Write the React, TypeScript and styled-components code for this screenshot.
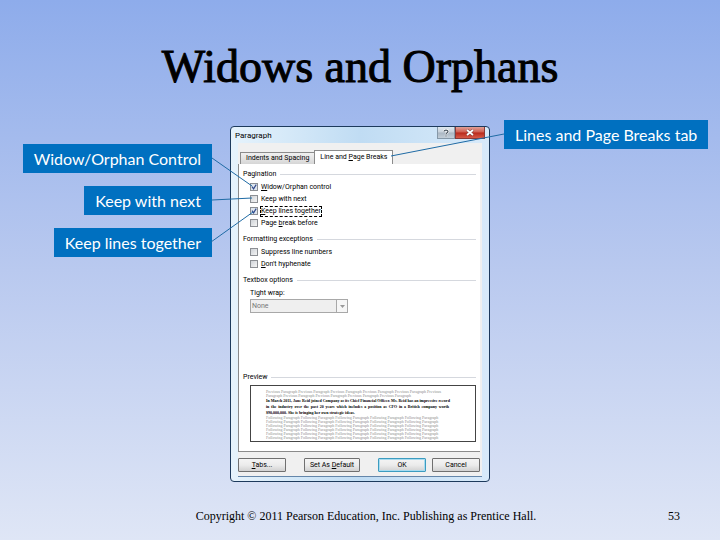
import React from "react";
import styled, { createGlobalStyle, css } from "styled-components";

const GlobalStyle = createGlobalStyle`
  *, *::before, *::after { box-sizing: border-box; }
  body { margin: 0; }
`;

const Slide = styled.main`
  display: flex;
  flex-direction: column;
  min-height: 100vh;
  background: linear-gradient(180deg, #8eaceb 0%, #b9c9ef 50%, #dfe6f6 100%);
  color: #000;
`;

const Title = styled.h1`
  margin: 0;
  padding-top: 39px;
  font: 400 46px/56px "Liberation Serif", serif;
  text-align: center;
  -webkit-text-stroke: 1px #000;
`;

const Stage = styled.section`
  display: grid;
  grid-template-columns: 1fr 260px 1fr;
  align-items: start;
  margin-top: 25px;
`;

const LeftNotes = styled.div`
  display: flex;
  flex-direction: column;
  align-items: flex-end;
  gap: 13px;
  padding: 24px 18px 0 0;
`;

const RightNotes = styled.div`
  display: flex;
  padding-left: 14px;
`;

const Callout = styled.div`
  padding: 0 11px;
  background: #0070c0;
  color: #fff;
  font: 400 16px/29px Lato, sans-serif;
  white-space: nowrap;
`;

const Dialog = styled.section`
  position: relative;
  margin-top: 6px;
  padding: 0 7px 4px;
  border: 1px solid #1d3a5c;
  border-radius: 4px;
  background: linear-gradient(90deg, #e6f3fc 0%, #c0dcf3 50%, #d8eafa 100%);
  font: 400 7px/12px Roboto, sans-serif;
`;

const Connectors = styled.svg`
  position: absolute;
  top: -7px;
  left: -19px;
  overflow: visible;
  pointer-events: none;
`;

const TitleBar = styled.header`
  display: flex;
  justify-content: space-between;
  height: 16px;
  margin: 0 -3px;
`;

const DialogTitle = styled.h2`
  margin: 0;
  padding-top: 2px;
  font: 400 8px/14px Roboto, sans-serif;
`;

const WindowButtons = styled.div`
  display: flex;
`;

const WindowButton = styled.button<{ $close?: boolean }>`
  display: grid;
  place-items: center;
  width: ${(p) => (p.$close ? 30 : 18)}px;
  height: 12px;
  padding: 0;
  border: 1px solid ${(p) => (p.$close ? "#8a3a38" : "#8698a8")};
  border-top: 0;
  background: ${(p) =>
    p.$close
      ? "linear-gradient(#e0a097 0%, #cf5a4c 48%, #b8281a 52%, #d65a48 100%)"
      : "linear-gradient(#dfe8ef 0%, #c6d0da 48%, #aab6c2 52%, #c3ced8 100%)"};
  color: #fff;
`;

const Body = styled.div`
  padding: 7px 2px 4px 0;
  border-bottom: 1px solid #6486aa;
  background: #f0f0f0;
`;

const TabList = styled.div`
  display: flex;
  align-items: flex-end;
  padding-left: 2px;
`;

const Tab = styled.button<{ $active?: boolean }>`
  height: ${(p) => (p.$active ? 14 : 12)}px;
  padding: 0 5px;
  border: 1px solid #8b8b8b;
  border-bottom: 0;
  ${(p) => !p.$active && css`border-right: 0;`}
  background: ${(p) => (p.$active ? "#fff" : "linear-gradient(#f0f0f0, #d6d6d6)")};
  font: 400 7px/11px Roboto, sans-serif;
  color: #000;
  white-space: nowrap;
`;

const Panel = styled.div`
  display: flex;
  flex-direction: column;
  min-height: 288px;
  padding: 3px 4px 6px 4px;
  border: solid #8b8b8b;
  border-width: 0 0 1px 1px;
  background: #fff;
`;

const Group = styled.fieldset<{ $last?: boolean }>`
  margin: 0 0 3px;
  margin-top: ${(p) => (p.$last ? "auto" : "0")};
  padding: 0;
  border: 0;
  min-width: 0;
`;

const Legend = styled.legend`
  display: flex;
  align-items: center;
  gap: 4px;
  width: 100%;
  padding: 0;
  line-height: 14px;

  &::after {
    content: "";
    flex: 1;
    height: 1px;
    background: #d5d8de;
  }
`;

const Option = styled.label`
  display: flex;
  align-items: center;
  gap: 2px;
  width: max-content;
  height: 12px;
  margin-left: 7px;
`;

const OptionText = styled.span<{ $focused?: boolean }>`
  padding: 0 1px;
  line-height: 11px;
  outline: ${(p) => (p.$focused ? "1px dashed #000" : "none")};
  outline-offset: -1px;
`;

const Check = styled.input`
  appearance: none;
  width: 8px;
  height: 8px;
  margin: 0;
  border: 1px solid #8c8f94;
  background: linear-gradient(135deg, #cfd3d8, #f5f5f5);

  &:checked {
    background: url("data:image/svg+xml,%3Csvg xmlns='http://www.w3.org/2000/svg' viewBox='0 0 6 6'%3E%3Cpath d='M1 2.6 2.6 4.8 5.2.6' fill='none' stroke='%23324a8c' stroke-width='1.2'/%3E%3C/svg%3E") center / 6px 6px no-repeat #dfe6ee;
  }
`;

const Field = styled.div`
  display: flex;
  flex-direction: column;
  margin-left: 7px;
`;

const SelectBox = styled.div`
  display: grid;
  grid-template-columns: 86px 12px;
  height: 14px;
`;

const Select = styled.select`
  grid-area: 1 / 1 / 2 / 3;
  appearance: none;
  padding: 0 1px;
  border: 1px solid #a8a8a8;
  border-radius: 0;
  background: #efefef;
  color: #777;
  opacity: 1;
  font: 400 7px/12px Roboto, sans-serif;
`;

const SelectArrow = styled.span`
  grid-area: 1 / 2;
  z-index: 1;
  display: grid;
  place-items: center;
  border: 1px solid #a8a8a8;
  background: #f6f6f6;
  pointer-events: none;
`;

const Preview = styled.div`
  margin: 1px 0 0 7px;
  padding: 4px 26px 1px 15px;
  border: 1px solid #444;
  font: 400 4px/4px "Liberation Serif", serif;
`;

const PreviewLine = styled.p<{ $tone: "muted" | "strong"; $justify?: boolean }>`
  margin: 0;
  white-space: nowrap;
  ${(p) =>
    p.$tone === "muted"
      ? css`color: #8e8e8e;`
      : css`color: #000; font-weight: 700; line-height: 6px;`}
  ${(p) => p.$justify && css`white-space: normal; text-align-last: justify;`}
`;

const Actions = styled.footer`
  display: flex;
  gap: 6px;
  padding-top: 6px;
`;

const ActionButton = styled.button<{ $primary?: boolean; $wide?: boolean }>`
  width: ${(p) => (p.$wide ? 56 : 48)}px;
  height: 14px;
  padding: 0;
  border: 1px solid ${(p) => (p.$primary ? "#3c9cc0" : "#707070")};
  border-radius: 1px;
  background: linear-gradient(#f4f4f4 0%, #ececec 50%, #d2d2d2 100%);
  ${(p) => p.$primary && css`box-shadow: inset 0 0 0 1px #a9dcf0;`}
  color: #000;
  font: 400 7px/12px Roboto, sans-serif;
`;

const Spring = styled.span`
  flex: 1;
`;

const Footer = styled.footer`
  display: grid;
  grid-template-columns: 1fr auto 1fr;
  margin-top: 24px;
  padding: 0 40px 12px;
  font: 400 12px/20px "Liberation Serif", serif;
`;

const Copyright = styled.span`
  grid-column: 2;
  padding-left: 12px;
`;

const PageNumber = styled.span`
  text-align: right;
`;

const repeat = (text: string, count: number) => Array(count).fill(text).join(" ");

const storyLines = [
  { text: "In March 2011, Jane Reid joined Company as its Chief Financial Officer. Ms. Reid has an impressive record", full: false },
  { text: "in the industry over the past 20 years which includes a position as CFO in a British company worth", full: true },
  { text: "$90,000,000. She is bringing her own strategic ideas.", full: false },
];

export default function App() {
  return (
    <Slide>
      <GlobalStyle />
      <Title>Widows and Orphans</Title>
      <Stage>
        <LeftNotes>
          <Callout>Widow/Orphan Control</Callout>
          <Callout>Keep with next</Callout>
          <Callout>Keep lines together</Callout>
        </LeftNotes>
        <Dialog aria-label="Paragraph">
          <TitleBar>
            <DialogTitle>Paragraph</DialogTitle>
            <WindowButtons>
              <WindowButton type="button" aria-label="Help">
                <svg width="8" height="8" viewBox="0 0 8 8" fill="none" stroke="#fff" strokeWidth="2.4">
                  <path d="M2 2.5C2 .6 6 .6 6 2.5 6 3.8 4 3.6 4 5.2M4 6.4v1.2" />
                  <path d="M2 2.5C2 .6 6 .6 6 2.5 6 3.8 4 3.6 4 5.2M4 6.4v1.2" stroke="#4a5560" strokeWidth="1.2" />
                </svg>
              </WindowButton>
              <WindowButton type="button" aria-label="Close" $close>
                <svg width="8" height="7" viewBox="0 0 8 7" fill="none">
                  <path d="M1 1l6 5M7 1L1 6" stroke="#6d3a3a" strokeWidth="2.6" />
                  <path d="M1 1l6 5M7 1L1 6" stroke="#fff" strokeWidth="1.7" />
                </svg>
              </WindowButton>
            </WindowButtons>
          </TitleBar>
          <Body>
            <TabList role="tablist">
              <Tab type="button" role="tab" aria-selected={false}>Indents and Spacing</Tab>
              <Tab type="button" role="tab" aria-selected $active>Line and <u>P</u>age Breaks</Tab>
            </TabList>
            <Panel role="tabpanel">
              <Group>
                <Legend>Pagination</Legend>
                <Option><Check type="checkbox" defaultChecked /><OptionText><u>W</u>idow/Orphan control</OptionText></Option>
                <Option><Check type="checkbox" /><OptionText>Keep with next</OptionText></Option>
                <Option><Check type="checkbox" defaultChecked /><OptionText $focused><u>K</u>eep lines together</OptionText></Option>
                <Option><Check type="checkbox" /><OptionText>Page <u>b</u>reak before</OptionText></Option>
              </Group>
              <Group>
                <Legend>Formatting exceptions</Legend>
                <Option><Check type="checkbox" /><OptionText>Suppress line numbers</OptionText></Option>
                <Option><Check type="checkbox" /><OptionText><u>D</u>on't hyphenate</OptionText></Option>
              </Group>
              <Group>
                <Legend>Textbox options</Legend>
                <Field>
                  <label htmlFor="wrap">Tight wrap:</label>
                  <SelectBox>
                    <Select id="wrap" disabled><option>None</option></Select>
                    <SelectArrow>
                      <svg width="5" height="3" viewBox="0 0 5 3"><path d="M0 0h5L2.5 3z" fill="#999" /></svg>
                    </SelectArrow>
                  </SelectBox>
                </Field>
              </Group>
              <Group $last>
                <Legend>Preview</Legend>
                <Preview>
                  <PreviewLine $tone="muted">{repeat("Previous Paragraph", 5)} Previous</PreviewLine>
                  <PreviewLine $tone="muted">Paragraph {repeat("Previous Paragraph", 4)}</PreviewLine>
                  {storyLines.map((line) => (
                    <PreviewLine key={line.text} $tone="strong" $justify={line.full}>{line.text}</PreviewLine>
                  ))}
                  {Array.from({ length: 6 }, (_, i) => (
                    <PreviewLine key={i} $tone="muted">{repeat("Following Paragraph", 5)}</PreviewLine>
                  ))}
                </Preview>
              </Group>
            </Panel>
            <Actions>
              <ActionButton type="button"><u>T</u>abs...</ActionButton>
              <Spring />
              <ActionButton type="button" $wide>Set As <u>D</u>efault</ActionButton>
              <Spring />
              <ActionButton type="button" $primary>OK</ActionButton>
              <ActionButton type="button">Cancel</ActionButton>
            </Actions>
          </Body>
          <Connectors width="292" height="140" viewBox="0 0 292 140" fill="none" stroke="#1f6ba5" aria-hidden="true">
            <path d="M0 38 40 66M0 80 40 78M-1 122 41 92M292 14 179 36" />
          </Connectors>
        </Dialog>
        <RightNotes>
          <Callout>Lines and Page Breaks tab</Callout>
        </RightNotes>
      </Stage>
      <Footer>
        <Copyright>Copyright © 2011 Pearson Education, Inc. Publishing as Prentice Hall.</Copyright>
        <PageNumber>53</PageNumber>
      </Footer>
    </Slide>
  );
}
